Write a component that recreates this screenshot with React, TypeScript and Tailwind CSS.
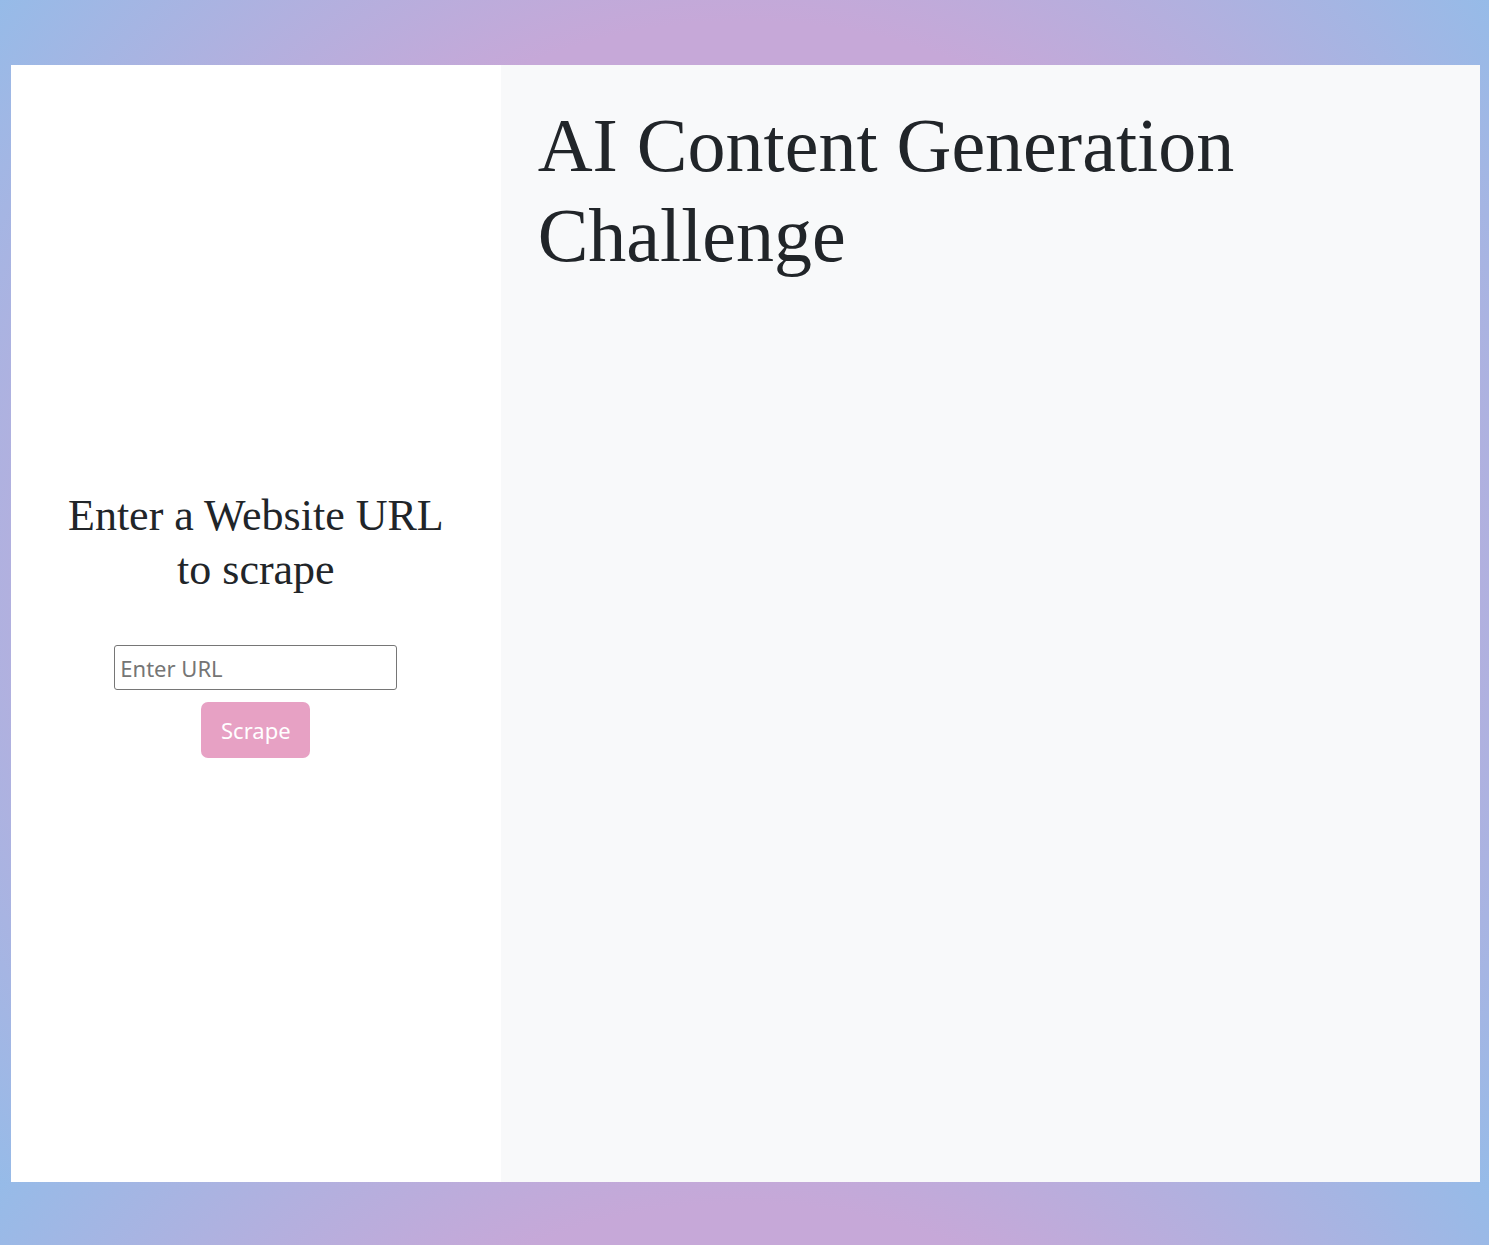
import { useState } from 'react';

export default function App() {
  const [url, setUrl] = useState('');

  return (
    <div className="min-h-screen w-full bg-[radial-gradient(circle_farthest-corner_at_center,#c6a8d8_60%,#96bbe8_100%)] bg-[length:100%_1183px] bg-repeat pt-[65px] pl-[11px] pr-[9px] pb-[63px]">
      <div className="flex h-[1117px] w-full">
        {/* Left: scrape form */}
        <div className="flex w-1/3 flex-col items-center justify-center bg-white">
          <h2 className="mb-[48px] text-center font-['Liberation_Serif',serif] text-[44px] leading-[54px] text-[#212529]">
            Enter a Website URL
            <br />
            to scrape
          </h2>
          <input
            type="text"
            value={url}
            onChange={(e) => setUrl(e.target.value)}
            placeholder="Enter URL"
            className="h-[45px] w-[283px] rounded-[3px] border border-[#767676] px-[5px] font-['Noto_Sans',sans-serif] text-[22px] text-[#212529] placeholder:text-[#757575] outline-none"
          />
          <button className="mt-[12px] h-[56px] w-[109px] rounded-[7px] bg-[#e7a1c4] font-['Noto_Sans',sans-serif] text-[22px] text-white">
            Scrape
          </button>
        </div>

        {/* Right: results */}
        <div className="flex-1 bg-[#f8f9fa] px-[37px] pt-[35px]">
          <h1 className="font-['Liberation_Serif',serif] text-[76px] leading-[90px] text-[#212529]">
            AI Content Generation Challenge
          </h1>
        </div>
      </div>
    </div>
  );
}
